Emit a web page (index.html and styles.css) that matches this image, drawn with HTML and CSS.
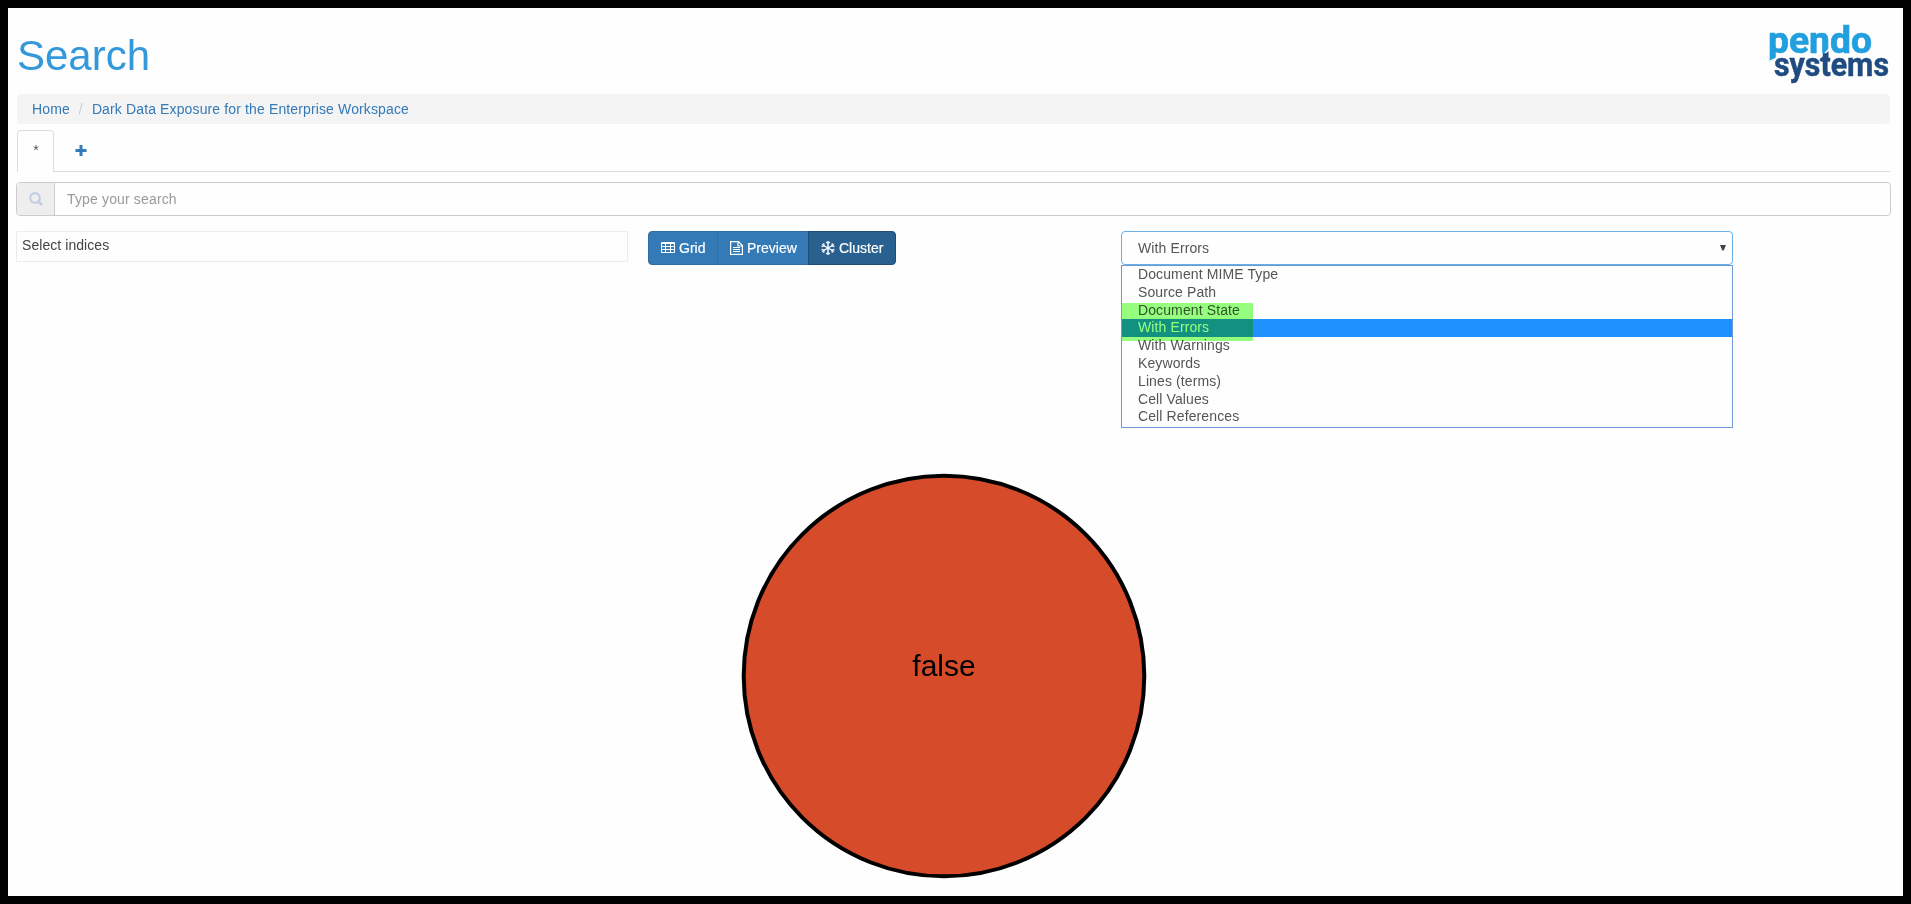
FILE: index.html
```html
<!DOCTYPE html>
<html lang="en">
<head>
<meta charset="utf-8">
<title>Search</title>
<link rel="stylesheet" href="styles.css">
</head>
<body>
<div class="page">
  <header class="header">
    <h1 class="title">Search</h1>
    <svg class="logo" viewBox="0 0 124 62" role="img" aria-label="pendo systems">
      <text class="logo-top" x="0" y="30" textLength="104" lengthAdjust="spacingAndGlyphs">pendo</text>
      <path class="logo-gap" d="M0 38.500L10 33.500V42H0Z"/>
      <path class="logo-gap" d="M47 40L62 24V40Z"/>
      <text class="logo-bottom" x="6" y="53" textLength="115" lengthAdjust="spacingAndGlyphs">systems</text>
      <path class="logo-tip-dark" d="M51 37.500L60.500 28V38Z"/>
    </svg>
  </header>
  <nav class="breadcrumb">
    <a class="crumb">Home</a><span class="slash">/</span><a class="crumb">Dark Data Exposure for the Enterprise Workspace</a>
  </nav>
  <div class="tabs">
    <div class="tab">*</div>
    <div class="add"><svg width="12" height="11" viewBox="0 0 12 11"><path d="M4.500 0h3v4h4v3h-4v4h-3V7h-4V4h4z" fill="#337ab7"/></svg></div>
  </div>
  <div class="search">
    <span class="addon"><svg width="14" height="14" viewBox="0 0 14 14" fill="none" stroke="#c3cede"><circle cx="6" cy="6" r="4.800" stroke-width="2.200"/><path d="M9.500 9.500L12.300 12.300" stroke-width="2.800" stroke-linecap="round"/></svg></span>
    <span class="placeholder">Type your search</span>
  </div>
  <div class="controls">
    <div class="indices">Select indices</div>
    <div class="buttons">
      <div class="button grid"><svg width="14" height="12" viewBox="0 0 14 12"><path fill="#fff" fill-rule="evenodd" d="M1 0h12a1 1 0 0 1 1 1v9a1 1 0 0 1-1 1H1a1 1 0 0 1-1-1V1a1 1 0 0 1 1-1zM1 2v2h3V2zM5 2v2h4V2zM10 2v2h3V2zM1 5v2h3V5zM5 5v2h4V5zM10 5v2h3V5zM1 8v2h3V8zM5 8v2h4V8zM10 8v2h3V8z"/></svg>Grid</div>
      <div class="button preview"><svg width="13" height="14" viewBox="0 0 13 14" fill="none" stroke="#fff"><path d="M.6.6h7.900l3.900 3.900v8.900H.6zM8 .6v4.400h4.400" stroke-width="1.200"/><path d="M3 6.500h7M3 8.500h7M3 10.500h7"/></svg>Preview</div>
      <div class="button cluster"><svg width="14" height="14" viewBox="0 0 14 14" fill="none" stroke="#fff" stroke-width="1.400"><g id="arm"><path d="M7 0v14"/><path d="M5 .8L7 2.600L9 .8M5 13.200L7 11.400L9 13.200" stroke-width="1.100"/></g><use href="#arm" transform="rotate(60 7 7)"/><use href="#arm" transform="rotate(120 7 7)"/></svg>Cluster</div>
    </div>
    <div class="field">
      <div class="select">With Errors<svg width="6" height="6" viewBox="0 0 6 6"><path d="M0 0h6L3.700 5.500H2.300z" fill="#444"/></svg></div>
      <div class="options">
        <div class="option">Document MIME Type</div>
        <div class="option">Source Path</div>
        <div class="option">Document State</div>
        <div class="option chosen">With Errors</div>
        <div class="option">With Warnings</div>
        <div class="option">Keywords</div>
        <div class="option">Lines (terms)</div>
        <div class="option">Cell Values</div>
        <div class="option">Cell References</div>
        <div class="marker"></div>
      </div>
    </div>
  </div>
  <svg class="chart" viewBox="0 0 406 406">
    <circle cx="203" cy="203" r="200.300" fill="#d64b2a" stroke="#000" stroke-width="4"/>
    <text x="203" y="203" text-anchor="middle" class="chart-label">false</text>
  </svg>
</div>
</body>
</html>
```
FILE: styles.css
```css
* { box-sizing: border-box; }
body {
  margin: 0;
  background: #000;
  font: 14px/20px "Liberation Sans", Arial, sans-serif;
  color: #555;
}
.page {
  height: 904px;
  border: 8px solid #000;
  background: #fefefe;
  padding: 0 12px 0 8px;
  display: flex;
  flex-direction: column;
  overflow: hidden;
}
.header {
  height: 86px;
  display: flex;
  justify-content: space-between;
}
.title {
  margin: 25px 0 0 1px;
  font-size: 42px;
  line-height: 46px;
  font-weight: 400;
  color: #3498db;
}
.logo { width: 124px; height: 62px; margin-top: 15px; margin-right: -1px; overflow: visible; }
.logo-top { font: 700 37px Roboto, sans-serif; fill: #219fdf; stroke: #219fdf; stroke-width: .7px; }
.logo-bottom { font: 700 33.5px Roboto, sans-serif; fill: #1f4b81; stroke: #1f4b81; stroke-width: .5px; }
.logo-tip-dark { fill: #1f4b81; }
.logo-gap { fill: #fefefe; }
.breadcrumb {
  height: 30px;
  margin: 0 1px;
  padding: 5px 15px;
  background: #f4f4f4;
  border-radius: 4px;
  display: flex;
  letter-spacing: .13px;
}
.crumb { color: #337ab7; }
.slash { color: #ccc; width: 22px; text-align: center; }
.tabs {
  height: 42px;
  margin: 6px 1px 0;
  display: flex;
  box-shadow: inset 0 -1px #ddd;
}
.tab {
  width: 37px;
  padding-top: 9px;
  padding-left: 1px;
  text-align: center;
  border: 1px solid #ddd;
  border-bottom: 0;
  border-radius: 4px 4px 0 0;
  background: #fefefe;
}
.add { padding: 15px 0 0 21px; line-height: 0; }
.search {
  height: 34px;
  margin-top: 10px;
  border: 1px solid #ccc;
  border-radius: 4px;
  display: flex;
  align-items: center;
  overflow: hidden;
}
.addon {
  width: 38px;
  height: 32px;
  background: #eee;
  border-right: 1px solid #ccc;
  display: flex;
  align-items: center;
  justify-content: center;
}
.placeholder { padding-left: 12px; color: #999; letter-spacing: .15px; }
.controls { display: flex; align-items: flex-start; height: 34px; margin-top: 15px; }
.indices {
  width: 612px;
  height: 31px;
  border: 1px solid #ececec;
  border-radius: 2px;
  padding: 3px 5px;
  color: #444;
  letter-spacing: .06px;
}
.buttons { display: flex; margin-left: 20px; width: 473px; }
.button {
  height: 34px;
  border: 1px solid #2e6da4;
  background: #337ab7;
  color: #fff;
  display: flex;
  align-items: center;
  padding-left: 12px;
  gap: 4px;
  -webkit-text-stroke: .2px #fff;
}
.grid { width: 70px; border-radius: 4px 0 0 4px; }
.preview { width: 92px; margin-left: -1px; }
.cluster { width: 88px; margin-left: -1px; background: #286090; border-color: #204d74; border-radius: 0 4px 4px 0; }
.field { width: 612px; position: relative; letter-spacing: .11px; }
.select {
  height: 34px;
  border: 1px solid #66afe9;
  border-radius: 4px;
  padding: 0 6px 0 16px;
  display: flex;
  align-items: center;
  justify-content: space-between;
}
.options {
  position: absolute;
  top: 34px;
  left: 0;
  width: 612px;
  height: 163px;
  border: 1px solid #6f98d2;
  background: #fefefe;
}
.option { height: 17.8px; line-height: 17.8px; padding-left: 16px; }
.chosen { background: #1e90ff; color: #fff; }
.marker {
  position: absolute;
  left: 0;
  top: 37px;
  width: 131px;
  height: 38px;
  background: #96ff80;
  mix-blend-mode: multiply;
}
.chart { width: 406px; height: 406px; margin: 208px 0 0 725px; flex: none; }
.chart-label { font-size: 30px; fill: #000; }
```
